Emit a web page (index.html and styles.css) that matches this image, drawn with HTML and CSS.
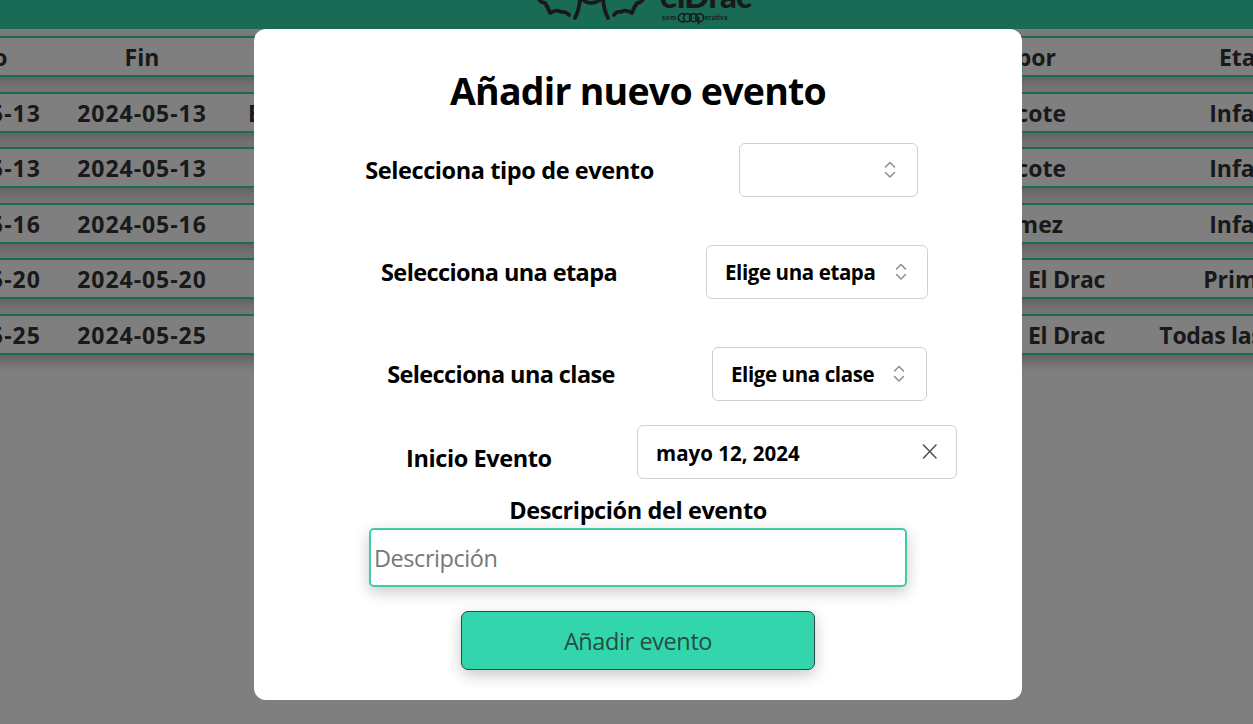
FILE: index.html
```
<!DOCTYPE html>
<html lang="es">
<head>
<meta charset="utf-8">
<title>Añadir nuevo evento</title>
<link rel="stylesheet" href="styles.css">
</head>
<body>
<header class="topbar">
  <svg class="logo" width="250" height="29" viewBox="520 0 250 29">
    <g fill="none" stroke="#333" stroke-width="3.8" stroke-linecap="round" stroke-linejoin="round">
      <path d="M538 -2 Q541 3 545 3 Q548 7 550 13 Q557 9 561 12 Q566 11 569 15"/>
      <path d="M644 -2 Q641 3 637 3 Q634 7 632 13 Q625 9 621 12 Q616 11 614 15"/>
      <path d="M580 -4 Q580 8 575 18M603 -4 Q603 8 608 18M583 0 Q591 6 600 0"/>
    </g>
    <text class="brand" x="660" y="7.500" textLength="92">elDrac</text>
    <text class="tagline" x="662" y="20" textLength="14">som</text>
    <g fill="none" stroke="#333" stroke-width="1.6">
      <path d="M685 14.600A4 4 0 1 0 685 20.800"/>
      <circle cx="687.500" cy="17.700" r="4"/><circle cx="693.500" cy="17.700" r="4"/><circle cx="699.500" cy="17.700" r="4"/>
      <path d="M698.500 17V24.500"/>
    </g>
    <text class="tagline" x="704.500" y="20" textLength="23">erativa</text>
  </svg>
</header>
<main class="events">
  <div class="event-row"><span>Inicio</span><span>Fin</span><span></span><span class="author por">por</span><span class="level">Etapa</span></div>
  <div class="event-row"><span class="date">2024-05-13</span><span class="date">2024-05-13</span><span class="kind">E</span><span class="author cote">cote</span><span class="level">Infantil</span></div>
  <div class="event-row"><span class="date">2024-05-13</span><span class="date">2024-05-13</span><span></span><span class="author cote">cote</span><span class="level">Infantil</span></div>
  <div class="event-row"><span class="date">2024-05-16</span><span class="date">2024-05-16</span><span></span><span class="author mez">mez</span><span class="level">Infantil</span></div>
  <div class="event-row"><span class="date">2024-05-20</span><span class="date">2024-05-20</span><span></span><span class="author drac">El Drac</span><span>Primaria</span></div>
  <div class="event-row"><span class="date">2024-05-25</span><span class="date">2024-05-25</span><span></span><span class="author drac">El Drac</span><span class="all">Todas las etapas</span></div>
</main>
<div class="overlay">
  <form class="modal">
    <h1>Añadir nuevo evento</h1>
    <div class="field type"><label>Selecciona tipo de evento</label>
      <div class="control"><span></span><svg class="chev" width="16" height="20" viewBox="0 0 16 20"><path d="M3.500 7L8 2.500L12.500 7M3.500 12.500L8 17L12.500 12.500"/></svg></div></div>
    <div class="field stage"><label>Selecciona una etapa</label>
      <div class="control"><span>Elige una etapa</span><svg class="chev" width="16" height="20" viewBox="0 0 16 20"><path d="M3.500 7L8 2.500L12.500 7M3.500 12.500L8 17L12.500 12.500"/></svg></div></div>
    <div class="field group"><label>Selecciona una clase</label>
      <div class="control"><span>Elige una clase</span><svg class="chev" width="16" height="20" viewBox="0 0 16 20"><path d="M3.500 7L8 2.500L12.500 7M3.500 12.500L8 17L12.500 12.500"/></svg></div></div>
    <div class="field start"><label>Inicio Evento</label>
      <div class="control"><span>mayo 12, 2024</span><svg class="close" width="16" height="16" viewBox="0 0 16 16"><path d="M1.500 1L14 14M14 1L1.500 14"/></svg></div></div>
    <label class="desc-label">Descripción del evento</label>
    <input class="desc" type="text" placeholder="Descripción">
    <button class="submit" type="button">Añadir evento</button>
  </form>
</div>
</body>
</html>
```
FILE: styles.css
```
* { box-sizing: border-box; }
body { margin: 0; height: 724px; overflow: hidden; position: relative; background: #fff; color: #333; font-family: "Open Sans", "Noto Sans", sans-serif; font-size: 24px; }
.topbar { height: 29px; background: #33d6ac; display: flex; padding-left: 520px; }
.logo { flex: none; }
.brand { font: 900 33px Lato, sans-serif; fill: #333; }
.tagline { font: 700 7px Lato, sans-serif; fill: #333; }
.events { padding-top: 7.050px; display: flex; flex-direction: column; gap: 14.600px; overflow: hidden; padding-bottom: 30px; }
.event-row { flex: none; width: 1500px; height: 41px; margin-left: -107px; display: grid; grid-template-columns: 166px 166px 600px 280px 296px; align-items: center; text-align: center; border: solid #33d6ac; border-width: 2px 0; box-shadow: 0 5px 15px rgba(0,0,0,.3); font-weight: 700; font-size: 23px; line-height: 37px; white-space: nowrap; }
.event-row span { padding-top: 1px; }
.event-row .date { letter-spacing: .95px; }
.event-row .kind { text-align: left; padding-left: 23px; }
.event-row .author { text-align: right; }
.event-row .por { padding-right: 49px; }
.event-row .cote { padding-right: 39px; }
.event-row .mez { padding-right: 42px; }
.event-row .drac { letter-spacing: -.3px; }
.event-row .level { padding-right: 3px; }
.event-row .all { letter-spacing: -.3px; padding-right: 3px; }
.overlay { position: absolute; inset: 0; padding: 29px 0 0 254px; background: rgba(0,0,0,.5); }
.modal { width: 768px; height: 671px; background: #fff; color: #000; border-radius: 12px; padding-top: 36px; display: flex; flex-direction: column; align-items: center; }
h1 { margin: 0; height: 78px; font-size: 37.500px; line-height: 52px; font-weight: 700; letter-spacing: -.77px; white-space: nowrap; }
label { font-weight: 700; font-size: 23.500px; letter-spacing: -.4px; white-space: nowrap; text-align: center; flex: none; }
.field { width: 768px; display: flex; align-items: center; height: 54px; flex: none; }
.type { padding-left: 111px; margin-bottom: 48px; }
.type label { width: 289px; margin-right: 85px; }
.type .control { width: 179px; padding-right: 19px; }
.stage { padding-left: 127px; margin-bottom: 48px; }
.stage label { width: 235px; margin-right: 90px; letter-spacing: -.6px; }
.stage .control { width: 222px; }
.group { padding-left: 133px; margin-bottom: 24px; }
.group label { width: 228px; margin-right: 97px; letter-spacing: -.6px; }
.group .control { width: 215px; padding-right: 19px; }
.start { padding-left: 152px; }
.start label { width: 145px; margin-right: 86px; padding-top: 11px; }
.start .control { width: 320px; padding-right: 18px; letter-spacing: 0; }
.start .control span { padding-top: 2px; }
.control { height: 54px; flex: none; display: flex; align-items: center; justify-content: space-between; border: 1px solid #ced1d3; border-radius: 6px; padding: 0 18px; font-weight: 700; font-size: 20.500px; letter-spacing: -.4px; white-space: nowrap; }
.chev, .close { flex: none; fill: none; stroke: #868e96; stroke-width: 1.500; stroke-linecap: round; stroke-linejoin: round; }
.close { stroke: #495057; }
.desc-label { margin-top: 15px; height: 34px; line-height: 33px; }
.desc { width: 538px; height: 59px; border: 2px solid #41cba8; border-radius: 5px; padding: 1px 3px 0; font: 23.500px "Open Sans", "Noto Sans", sans-serif; letter-spacing: -.45px; box-shadow: 0 5px 15px rgba(0,0,0,.22); outline: 0; }
.desc::placeholder { color: #777; opacity: 1; }
.submit { width: 354px; height: 59px; margin-top: 24px; border: 1px solid #264d43; border-radius: 7px; background: #33d6ac; color: #264d43; font: 23.500px "Open Sans", "Noto Sans", sans-serif; letter-spacing: -.4px; padding: 1px 0 0; box-shadow: 0 5px 15px rgba(0,0,0,.22); }
```
